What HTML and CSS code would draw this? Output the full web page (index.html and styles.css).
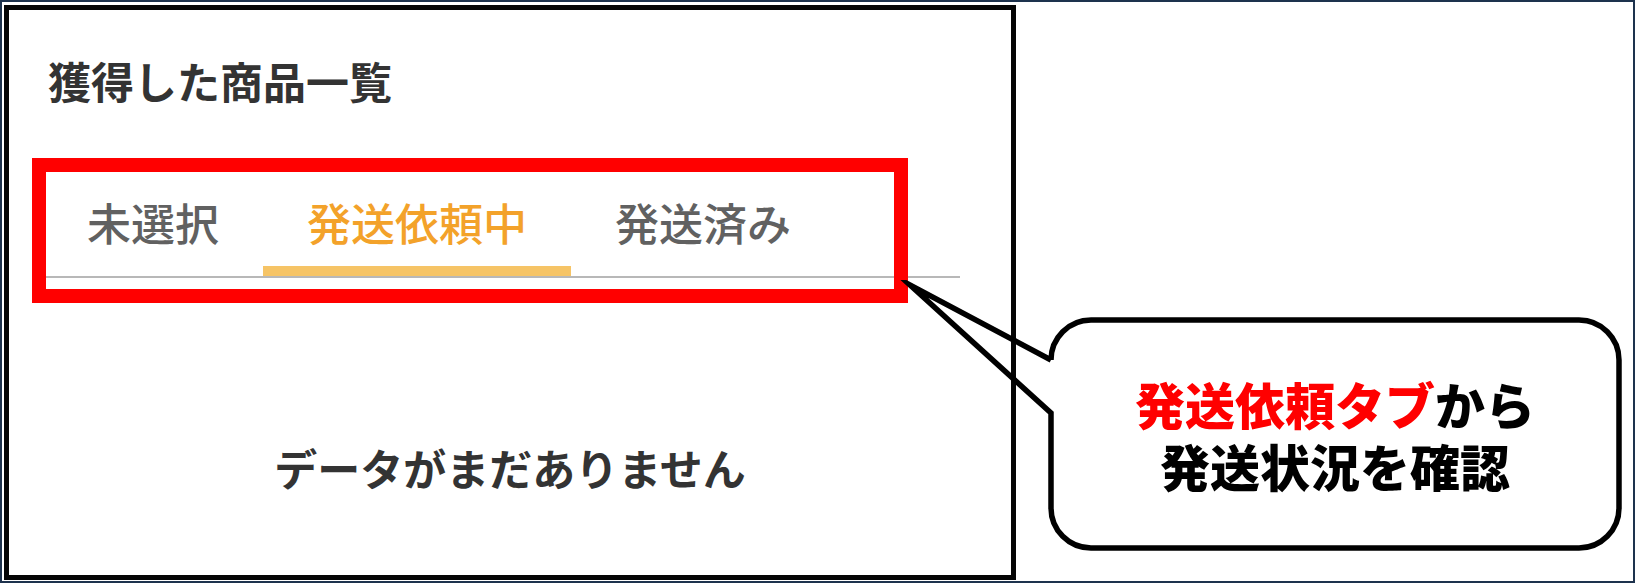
FILE: index.html
```html
<!DOCTYPE html>
<html lang="ja">
<head>
<meta charset="utf-8">
<title>獲得した商品一覧</title>
<link rel="stylesheet" href="styles.css">
</head>
<body>
<div class="frame">
  <div class="card">
    <h2 class="title">獲得した商品一覧</h2>
    <div class="tabs">
      <div class="tab">未選択</div>
      <div class="tab active">発送依頼中</div>
      <div class="tab">発送済み</div>
    </div>
    <p class="empty">データがまだありません</p>
    <div class="highlight"></div>
  </div>
  <div class="callout">
    <svg class="callout-shape" width="735" height="280" viewBox="0 0 735 280">
      <path d="M151 80 L10 5 L151 133 V228 A40 40 0 0 0 191 268 H679 A40 40 0 0 0 719 228 V80 A40 40 0 0 0 679 40 H191 A40 40 0 0 0 151 80" fill="none" stroke="#000" stroke-width="5.5" stroke-linejoin="miter" stroke-miterlimit="12"/>
    </svg>
    <div class="callout-body">
      <p class="callout-text"><span class="red">発送依頼タブ</span>から<br>発送状況を確認</p>
    </div>
  </div>
</div>
</body>
</html>
```
FILE: styles.css
```css
* { box-sizing: border-box; }
html, body { margin: 0; padding: 0; background: #fff; }
body { font-family: "Noto Sans CJK JP", "Noto Sans", sans-serif; }

.frame {
  position: relative;
  width: 1635px;
  height: 583px;
  border: 2px solid #1d324d;
  padding: 3px 0 0 2px;
}

.card {
  position: relative;
  width: 1012px;
  height: 575px;
  border: 5px solid #050505;
  background: #fff;
}

.title {
  margin: 49px 0 0 39px;
  font-size: 43px;
  line-height: 43px;
  font-weight: 700;
  color: #333;
}

.tabs {
  display: flex;
  margin: 98px 51px 0 34px;
  border-bottom: 2px solid #b8b8b8;
}

.tab {
  padding: 0 44px 22px;
  font-size: 44px;
  line-height: 44px;
  font-weight: 500;
  color: #616161;
  border-bottom: 10px solid transparent;
  white-space: nowrap;
}

.tab.active {
  color: #f3a22a;
  border-bottom-color: #f6c466;
}

.empty {
  margin: 168px 0 0;
  text-align: center;
  font-size: 43px;
  line-height: 43px;
  font-weight: 700;
  color: #333;
}

.highlight {
  position: absolute;
  left: 23px;
  top: 148px;
  width: 876px;
  height: 145px;
  border: 14px solid #ff0000;
}

.callout {
  position: absolute;
  left: 898px;
  top: 278px;
  width: 735px;
  height: 280px;
}

.callout-shape {
  position: absolute;
  left: 0;
  top: 0;
  display: block;
}

.callout-body {
  position: absolute;
  left: 151px;
  top: 40px;
  width: 568px;
  height: 228px;
  display: flex;
  align-items: center;
  justify-content: center;
}

.callout-text {
  margin: 0;
  text-align: center;
  font-size: 50px;
  line-height: 62px;
  font-weight: 900;
  color: #000;
  white-space: nowrap;
}

.red { color: #ff0000; }
```
